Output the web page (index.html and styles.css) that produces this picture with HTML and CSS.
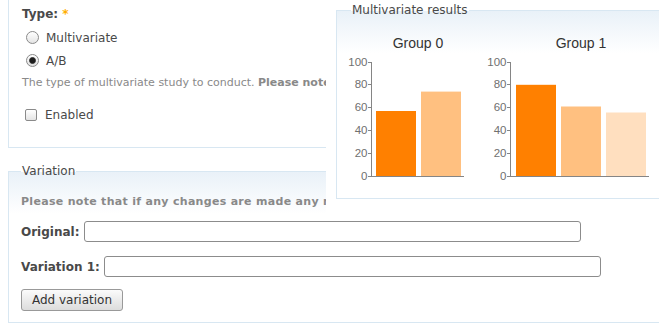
FILE: index.html
```html
<!DOCTYPE html>
<html lang="en">
<head>
    <meta charset="UTF-8">
    <meta name="viewport" content="width=device-width, initial-scale=1.0">
    <title>Multivariate test</title>
    <link rel="stylesheet" href="styles.css">
</head>
<body>
    <div class="page">
        <fieldset class="group group-type">
            <div class="form-item">
                <label class="title">Type: <span class="required">*</span></label>
                <label class="option"><input type="radio" name="type"> Multivariate</label>
                <label class="option"><input type="radio" name="type" checked> A/B</label>
                <div class="description">The type of multivariate study to conduct. <strong>Please note that changing the type will reset any collected results.</strong></div>
            </div>
            <label class="option check"><input type="checkbox"> Enabled</label>
        </fieldset>

        <fieldset class="group group-variation">
            <legend>Variation</legend>
            <div class="note">Please note that if any changes are made any results collected so far will be lost.</div>
            <div class="field-row">
                <label for="original">Original:</label>
                <input type="text" id="original" class="form-text">
            </div>
            <div class="field-row">
                <label for="variation1">Variation 1:</label>
                <input type="text" id="variation1" class="form-text">
            </div>
            <button type="button" class="form-submit">Add variation</button>
        </fieldset>

        <div class="results-wrap">
            <fieldset class="group results">
                <legend>Multivariate results</legend>
                <div class="charts">
                    <svg class="chart" width="130" height="155" viewBox="0 0 130 155">
                        <text class="chart-title" x="77" y="18" text-anchor="middle">Group 0</text>
                        <g class="ticks">
                            <line x1="27" y1="146.5" x2="30" y2="146.5"/>
                            <line x1="27" y1="123.5" x2="30" y2="123.5"/>
                            <line x1="27" y1="100.5" x2="30" y2="100.5"/>
                            <line x1="27" y1="77.5" x2="30" y2="77.5"/>
                            <line x1="27" y1="54.5" x2="30" y2="54.5"/>
                            <line x1="27" y1="32.5" x2="30" y2="32.5"/>
                        </g>
                        <g class="labels" text-anchor="end">
                            <text x="26.5" y="150">0</text>
                            <text x="26.5" y="127">20</text>
                            <text x="26.5" y="104">40</text>
                            <text x="26.5" y="81">60</text>
                            <text x="26.5" y="58">80</text>
                            <text x="26.5" y="36">100</text>
                        </g>
                        <rect class="bar-1" x="35" y="81" width="40" height="65"/>
                        <rect class="bar-2" x="80" y="61.6" width="40" height="84.4"/>
                        <line class="axis" x1="30.5" y1="32" x2="30.5" y2="146"/>
                        <line class="axis" x1="30" y1="146.5" x2="123" y2="146.5"/>
                    </svg>
                    <svg class="chart" width="175" height="155" viewBox="0 0 175 155">
                        <text class="chart-title" x="101" y="18" text-anchor="middle">Group 1</text>
                        <g class="ticks">
                            <line x1="27" y1="146.5" x2="30" y2="146.5"/>
                            <line x1="27" y1="123.5" x2="30" y2="123.5"/>
                            <line x1="27" y1="100.5" x2="30" y2="100.5"/>
                            <line x1="27" y1="77.5" x2="30" y2="77.5"/>
                            <line x1="27" y1="54.5" x2="30" y2="54.5"/>
                            <line x1="27" y1="32.5" x2="30" y2="32.5"/>
                        </g>
                        <g class="labels" text-anchor="end">
                            <text x="26.5" y="150">0</text>
                            <text x="26.5" y="127">20</text>
                            <text x="26.5" y="104">40</text>
                            <text x="26.5" y="81">60</text>
                            <text x="26.5" y="58">80</text>
                            <text x="26.5" y="36">100</text>
                        </g>
                        <rect class="bar-1" x="36" y="54.8" width="40" height="91.2"/>
                        <rect class="bar-2" x="81" y="76.5" width="40" height="69.5"/>
                        <rect class="bar-3" x="126" y="82.5" width="40" height="63.5"/>
                        <line class="axis" x1="30.5" y1="32" x2="30.5" y2="146"/>
                        <line class="axis" x1="30" y1="146.5" x2="169" y2="146.5"/>
                    </svg>
                </div>
            </fieldset>
        </div>
    </div>
</body>
</html>
```

FILE: styles.css
```css
html, body {
    margin: 0;
    overflow: hidden;
}
body {
    font-family: "DejaVu Sans", Verdana, sans-serif;
    font-size: 12px;
    color: #494949;
    background: #fff;
}
.page {
    position: relative;
    display: flow-root;
    padding-left: 8px;
    height: 331px;
}
.group {
    border: 1px solid #d8e7f2;
    background: linear-gradient(#e9f1f8, #fff 42px);
    margin: 0 -30px 0 0;
    padding: 0 12px 11px;
    min-inline-size: 0;
}
.group legend {
    padding: 0 1px;
    line-height: 15px;
    color: #494949;
}
.group-type {
    margin-top: -10px;
    padding: 16px 13px 21px;
    background: #fff;
}
.title {
    display: block;
    font-weight: bold;
    line-height: 15px;
    margin-bottom: 4px;
}
.required {
    color: #ffae00;
}
.option {
    display: flex;
    align-items: center;
    height: 23px;
    padding-left: 4px;
}
.option input {
    appearance: none;
    -webkit-appearance: none;
    width: 13px;
    height: 13px;
    margin: 0 7px 0 0;
    border: 1px solid #8a8a8a;
    border-radius: 50%;
    background: linear-gradient(#fff, #e4e4e4);
}
.option input:checked {
    background: radial-gradient(circle, #1e1e1e 0 2.6px, #666 3.2px, transparent 3.8px), linear-gradient(#fff, #e0e0e0);
}
.option input[type=checkbox] {
    width: 12px;
    height: 12px;
    border-radius: 2px;
    margin-right: 8px;
}
.check {
    padding-left: 3px;
    margin-top: 13px;
}
.description {
    font-size: 11px;
    line-height: 14px;
    color: #898989;
    margin-top: 4px;
    white-space: nowrap;
}
.description strong {
    font-weight: bold;
}
.group-variation {
    margin-top: 16px;
}
.note {
    font-size: 11px;
    font-weight: bold;
    line-height: 14px;
    color: #898989;
    margin-top: 16px;
    white-space: nowrap;
    letter-spacing: 0.3px;
}
.field-row {
    display: flex;
    align-items: center;
    gap: 4px;
    margin-top: 12px;
}
.field-row + .field-row {
    margin-top: 14px;
}
.field-row label {
    font-weight: bold;
}
.form-text {
    box-sizing: border-box;
    width: 497px;
    height: 21px;
    margin: 0;
    border: 1px solid #8c8c8c;
    border-radius: 3px;
    background: #fff;
}
.form-submit {
    display: block;
    box-sizing: border-box;
    width: 102px;
    height: 22px;
    margin-top: 12px;
    padding: 0;
    font-family: "DejaVu Sans", Verdana, sans-serif;
    font-size: 12px;
    color: #333;
    border: 1px solid #999;
    border-radius: 3px;
    background: linear-gradient(#fbfbfb, #dcdcdc);
}
.results-wrap {
    position: absolute;
    top: 0;
    left: 326px;
    right: 0;
    height: 212px;
    padding: 3px 0 0 10px;
    background: #fff;
}
.results {
    margin: 0 -40px 0 0;
    padding: 0 14px 13px;
}
.charts {
    display: flex;
    gap: 9px;
    margin: 12px 0 0 -10px;
}
.chart {
    display: block;
    font-family: "Liberation Sans", Arial, sans-serif;
}
.chart-title {
    font-size: 14px;
    fill: #333;
}
.labels text {
    font-size: 11.5px;
    fill: #707070;
}
.ticks line, .axis {
    stroke: #858585;
    stroke-width: 1;
}
.bar-1 {
    fill: #ff8000;
}
.bar-2 {
    fill: #ffc080;
}
.bar-3 {
    fill: #ffdfbf;
}
```
